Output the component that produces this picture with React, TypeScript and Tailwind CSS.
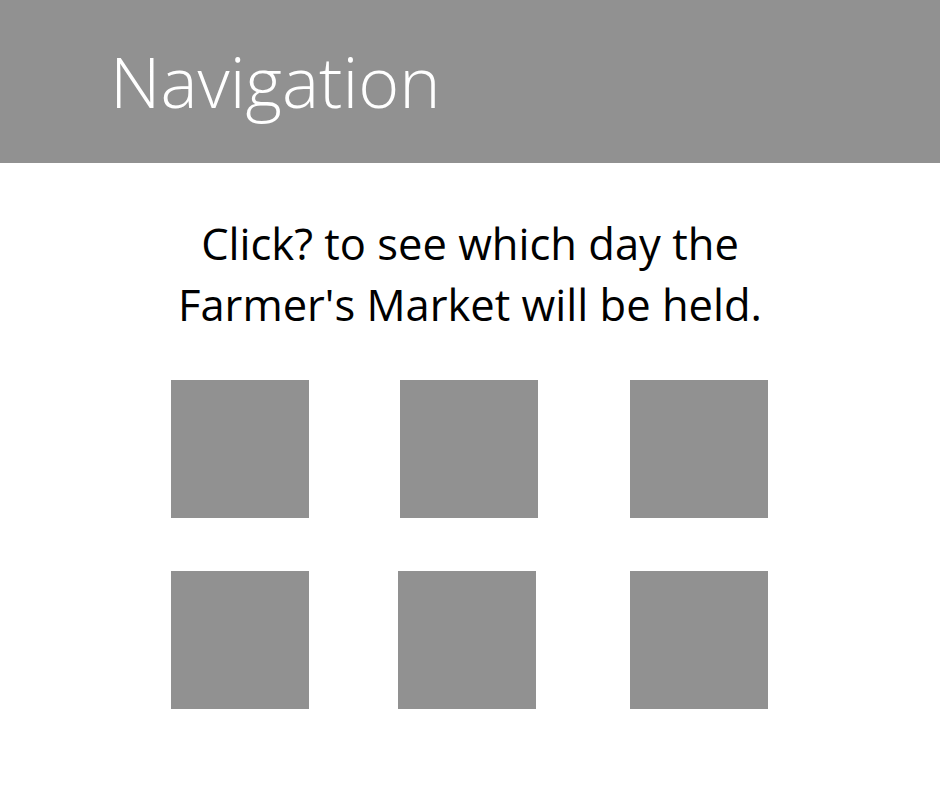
const rows = [
  ['ml-[171px]', 'ml-[91px]', 'ml-[92px]'],
  ['ml-[171px]', 'ml-[89px]', 'ml-[94px]'],
]

function Tile({ className }: { className: string }) {
  return <button className={`${className} h-[138px] w-[138px] shrink-0 bg-[#919191]`} />
}

export default function App() {
  return (
    <div className="min-h-[788px] w-[940px] bg-white font-['Open_Sans',sans-serif]">
      <header className="flex h-[163px] items-center bg-[#919191] pl-[110px]">
        <h1 className="pb-[2px] text-[70px] font-light leading-none text-white">Navigation</h1>
      </header>

      <p className="h-[217px] pt-[50px] text-center text-[43.5px] leading-[61px] text-black">
        Click? to see which day the
        <br />
        Farmer's Market will be held.
      </p>

      <div className="flex flex-col gap-[53px]">
        {rows.map((row, i) => (
          <div key={i} className="flex">
            {row.map((ml, j) => (
              <Tile key={j} className={ml} />
            ))}
          </div>
        ))}
      </div>
    </div>
  )
}
